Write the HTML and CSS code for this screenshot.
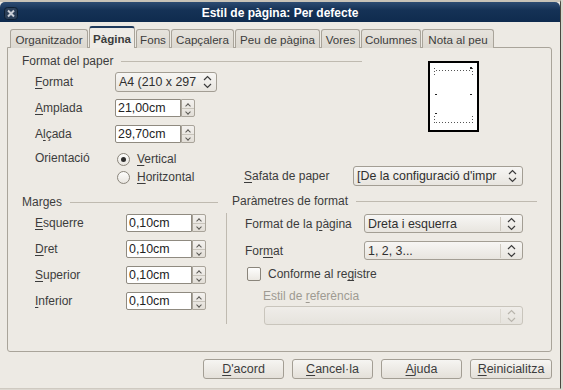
FILE: index.html
```html
<!DOCTYPE html>
<html>
<head>
  <title>Estil de pàgina: Per defecte</title>
  <link rel="stylesheet" href="styles.css">
</head>
<body>
  <div class="window">
    <div class="titlebar">
      <span class="close">
        <svg width="14" height="13" viewBox="0 0 14 13">
          <rect x="0.5" y="0.5" width="13" height="12" rx="3" fill="#2b3f58" stroke="#0d1f33"/>
          <path d="M4 3.5 L10 9.5 M10 3.5 L4 9.5" stroke="#c9ced6" stroke-width="2"/>
        </svg>
      </span>
      <span class="title">Estil de pàgina: Per defecte</span>
    </div>

    <div class="dialog">
      <div class="tabs">
        <div class="tab tab-organitzador">Organitzador</div>
        <div class="tab tab-pagina active">Pàgina</div>
        <div class="tab tab-fons">Fons</div>
        <div class="tab tab-capcalera">Capçalera</div>
        <div class="tab tab-peu">Peu de pàgina</div>
        <div class="tab tab-vores">Vores</div>
        <div class="tab tab-columnes">Columnes</div>
        <div class="tab tab-nota">Nota al peu</div>
      </div>

      <div class="panel">
        <!-- Format del paper -->
        <div class="paper-top">
          <div class="paper-main">
            <div class="heading"><span>Format del paper</span></div>
            <div class="field-row">
              <label class="label"><u>F</u>ormat</label>
              <div class="combo combo-format">
                <span class="combo-text">A4 (210 x 297</span>
                <span class="combo-arrow">
                  <svg width="9" height="14" viewBox="0 0 9 14"><path d="M1 5 L4.5 1.5 L8 5 M1 9 L4.5 12.5 L8 9" fill="none" stroke="#3c3c3c" stroke-width="1.2"/></svg>
                </span>
              </div>
            </div>
            <div class="field-row">
              <label class="label"><u>A</u>mplada</label>
              <div class="spin">
                <span class="spin-text">21,00cm</span>
                <span class="spin-btns"><i class="up"></i><i class="down"></i></span>
              </div>
            </div>
            <div class="field-row">
              <label class="label">A<u>l</u>çada</label>
              <div class="spin">
                <span class="spin-text">29,70cm</span>
                <span class="spin-btns"><i class="up"></i><i class="down"></i></span>
              </div>
            </div>
          </div>
          <div class="preview">
            <svg width="47" height="67" viewBox="0 0 47 67">
              <g stroke="#555" stroke-width="1" stroke-dasharray="1 2" fill="none">
                <line x1="6" y1="7.5" x2="41" y2="7.5"/>
                <line x1="6" y1="59.5" x2="41" y2="59.5"/>
                <line x1="4.5" y1="5" x2="4.5" y2="14"/>
                <line x1="42.5" y1="5" x2="42.5" y2="14"/>
                <line x1="4.5" y1="53" x2="4.5" y2="62"/>
                <line x1="42.5" y1="53" x2="42.5" y2="62"/>
              </g>
              <g fill="#222">
                <rect x="5" y="31" width="2" height="1"/>
                <rect x="40" y="31" width="2" height="1"/>
                <rect x="5" y="50" width="2" height="1"/>
                <rect x="40" y="4" width="2" height="2"/>
              </g>
            </svg>
          </div>
        </div>

        <div class="orient">
          <label class="label orient-label">Orientació</label>
          <div class="radios">
            <div class="radio-row"><span class="radio checked"></span><span><u>V</u>ertical</span></div>
            <div class="radio-row"><span class="radio"></span><span><u>H</u>oritzontal</span></div>
          </div>
          <div class="tray">
            <label class="tray-label"><u>S</u>afata de paper</label>
            <div class="combo combo-tray">
              <span class="combo-text">[De la configuració d'impr</span>
              <span class="combo-arrow">
                <svg width="9" height="14" viewBox="0 0 9 14"><path d="M1 5 L4.5 1.5 L8 5 M1 9 L4.5 12.5 L8 9" fill="none" stroke="#3c3c3c" stroke-width="1.2"/></svg>
              </span>
            </div>
          </div>
        </div>

        <div class="bottom">
          <!-- Marges -->
          <div class="margins">
            <div class="heading"><span>Marges</span></div>
            <div class="field-row">
              <label class="label label-wide"><u>E</u>squerre</label>
              <div class="spin"><span class="spin-text">0,10cm</span><span class="spin-btns"><i class="up"></i><i class="down"></i></span></div>
            </div>
            <div class="field-row">
              <label class="label label-wide"><u>D</u>ret</label>
              <div class="spin"><span class="spin-text">0,10cm</span><span class="spin-btns"><i class="up"></i><i class="down"></i></span></div>
            </div>
            <div class="field-row">
              <label class="label label-wide"><u>S</u>uperior</label>
              <div class="spin"><span class="spin-text">0,10cm</span><span class="spin-btns"><i class="up"></i><i class="down"></i></span></div>
            </div>
            <div class="field-row">
              <label class="label label-wide"><u>I</u>nferior</label>
              <div class="spin"><span class="spin-text">0,10cm</span><span class="spin-btns"><i class="up"></i><i class="down"></i></span></div>
            </div>
          </div>

          <!-- Paràmetres de format -->
          <div class="params">
            <div class="heading heading-params"><span>Paràmetres de format</span></div>
            <div class="params-body">
              <div class="param-row">
                <label class="param-label">Format de la <u>p</u>àgina</label>
                <div class="combo combo-param">
                  <span class="combo-text">Dreta i esquerra</span>
                  <span class="combo-arrow">
                    <svg width="9" height="14" viewBox="0 0 9 14"><path d="M1 5 L4.5 1.5 L8 5 M1 9 L4.5 12.5 L8 9" fill="none" stroke="#3c3c3c" stroke-width="1.2"/></svg>
                  </span>
                </div>
              </div>
              <div class="param-row param-row-2">
                <label class="param-label">For<u>m</u>at</label>
                <div class="combo combo-param">
                  <span class="combo-text">1, 2, 3...</span>
                  <span class="combo-arrow">
                    <svg width="9" height="14" viewBox="0 0 9 14"><path d="M1 5 L4.5 1.5 L8 5 M1 9 L4.5 12.5 L8 9" fill="none" stroke="#3c3c3c" stroke-width="1.2"/></svg>
                  </span>
                </div>
              </div>
              <div class="check-row">
                <span class="checkbox"></span>
                <span>Conforme al re<u>g</u>istre</span>
              </div>
              <div class="ref-label">Estil de <u>r</u>eferència</div>
              <div class="combo combo-disabled">
                <span class="combo-text"></span>
                <span class="combo-arrow">
                  <svg width="9" height="14" viewBox="0 0 9 14"><path d="M1 5 L4.5 1.5 L8 5 M1 9 L4.5 12.5 L8 9" fill="none" stroke="#b9b5ad" stroke-width="1.2"/></svg>
                </span>
              </div>
            </div>
          </div>
        </div>
      </div>

      <div class="buttons">
        <button><u>D</u>'acord</button>
        <button><u>C</u>ancel·la</button>
        <button><u>A</u>juda</button>
        <button><u>R</u>einicialitza</button>
      </div>
    </div>
  </div>
</body>
</html>
```

FILE: styles.css
```css
body {
  margin: 0;
  font-family: "Liberation Sans", Arial, sans-serif;
  font-size: 12px;
  color: #3c3c3c;
  background-color: #dcd8d0;
}

u {
  text-decoration: underline;
  text-underline-offset: 2px;
}

.window {
  width: 561px;
  height: 389px;
  border-right: 1px solid #4a4740;
  border-bottom: 1px solid #cfcac1;
  background-color: #edeae4;
  border-top: 2px solid #c8c3b8;
  box-sizing: border-box;
}

.titlebar {
  height: 20px;
  display: flex;
  align-items: center;
  background: linear-gradient(#2d4c72, #153256 40%, #0f2b4e);
  border-radius: 5px 5px 0 0;
}

.close {
  display: flex;
  margin-left: 4px;
  margin-top: 3px;
}

.title {
  flex: 1;
  text-align: center;
  color: #fff;
  font-weight: bold;
  font-size: 12px;
  margin-right: 18px;
  margin-top: 2px;
}

/* tabs */
.tabs {
  display: flex;
  align-items: flex-end;
  height: 21px;
  padding-top: 5px;
  padding-left: 10px;
  position: relative;
  z-index: 1;
  margin-bottom: -1px;
}

.tab {
  height: 18px;
  line-height: 19px;
  text-align: center;
  font-size: 11.6px;
  color: #3c3c3c;
  background: linear-gradient(#e6e3dd, #dcd8d0);
  border: 1px solid #a9a49a;
  border-bottom: none;
  border-radius: 3px 3px 0 0;
  margin-right: 1px;
  white-space: nowrap;
}

.tab.active {
  height: 20px;
  line-height: 21px;
  font-weight: bold;
  background: #efece7;
  border-top: 2px solid #1f3a5c;
}

.tab-organitzador { width: 76px; }
.tab-pagina { width: 44px; }
.tab-fons { width: 32px; }
.tab-capcalera { width: 61px; }
.tab-peu { width: 83px; }
.tab-vores { width: 37px; }
.tab-columnes { width: 58px; }
.tab-nota { width: 70px; }

.panel {
  margin-left: 7px;
  width: 543px;
  height: 303px;
  border: 1px solid #a9a49a;
  border-radius: 0 3px 3px 3px;
  background-color: #edeae4;
}

.heading {
  display: flex;
  align-items: center;
  height: 14px;
  line-height: 14px;
  color: #3c3c3c;
}

.heading::after {
  content: "";
  flex: 1;
  height: 1px;
  margin-left: 8px;
  background-color: #bfbab0;
}

/* paper format */
.paper-top {
  display: flex;
}

.paper-main {
  width: 340px;
  margin-left: 14px;
  padding-top: 6px;
}

.paper-main .heading {
  margin-bottom: 1px;
}

.field-row {
  display: flex;
  align-items: center;
  height: 26px;
}

.label {
  width: 80px;
  padding-left: 13px;
  flex-shrink: 0;
}

.label-wide {
  width: 91px;
}

.preview {
  margin-left: 66px;
  margin-top: 13px;
  width: 47px;
  height: 67px;
  border: 2px solid #000;
  background-color: #fff;
}

.preview svg {
  display: block;
}

/* combo boxes */
.combo {
  display: flex;
  align-items: center;
  height: 18px;
  border: 1px solid #a39e94;
  border-radius: 3px;
  background: linear-gradient(#f7f6f4, #e8e5df);
  overflow: hidden;
}

.combo-text {
  flex: 1;
  padding-left: 3px;
  white-space: nowrap;
  overflow: hidden;
  font-size: 12.4px;
  color: #2f2f2f;
}

.combo-arrow {
  display: flex;
  align-items: center;
  height: 14px;
  padding: 0 6px;
  border-left: 1px solid #cfcac1;
}

.combo-format {
  width: 100px;
}

.combo-format .combo-arrow {
  border-left: none;
  padding: 0 4px 0 2px;
}

.combo-tray {
  width: 168px;
}

.combo-tray .combo-arrow {
  border-left: none;
  padding: 0 5px 0 2px;
}

.combo-param {
  width: 157px;
  height: 17px;
}

.combo-disabled {
  width: 257px;
  height: 17px;
  margin-left: 37px;
  margin-top: 3px;
  border-color: #c9c5bc;
  background: linear-gradient(#efede9, #e6e3dd);
}

.combo-disabled .combo-arrow {
  border-left-color: #dcd8d0;
}

/* spin boxes */
.spin {
  display: flex;
  height: 18px;
  width: 80px;
}

.spin-text {
  width: 62px;
  padding-left: 2px;
  line-height: 16px;
  border: 1px solid #8f8a80;
  border-radius: 2px 0 0 2px;
  background-color: #fff;
  font-size: 12.4px;
  color: #222;
}

.spin-btns {
  width: 12px;
  display: flex;
  flex-direction: column;
  border: 1px solid #a9a49a;
  border-radius: 0 2px 2px 0;
  background: linear-gradient(#f3f1ee, #e2ded7);
}

.spin-btns i {
  flex: 1;
  position: relative;
}

.spin-btns i.up {
  border-bottom: 1px solid #c9c5bc;
}

.spin-btns i::after {
  content: "";
  position: absolute;
  left: 4px;
  width: 3px;
  height: 3px;
  border-left: 1px solid #5a5853;
  border-top: 1px solid #5a5853;
}

.spin-btns i.up::after {
  top: 4px;
  transform: rotate(45deg);
}

.spin-btns i.down::after {
  top: 1px;
  transform: rotate(-135deg);
}

/* orientation */
.orient {
  display: flex;
  margin-top: 3px;
  padding-left: 27px;
}

.orient-label {
  padding-left: 0;
  width: 80px;
  line-height: 14px;
  margin-top: 1px;
}

.radios {
  width: 129px;
}

.radio-row {
  display: flex;
  align-items: center;
  height: 18px;
}

.radio {
  width: 11px;
  height: 11px;
  margin-left: 2px;
  margin-right: 7px;
  border: 1px solid #8a857b;
  border-radius: 50%;
  background: linear-gradient(#fdfdfc, #e9e6e0);
  position: relative;
}

.radio.checked::after {
  content: "";
  position: absolute;
  left: 3px;
  top: 3px;
  width: 5px;
  height: 5px;
  border-radius: 50%;
  background-color: #2e2e2e;
}

.tray {
  display: flex;
  align-items: center;
  margin-top: 16px;
  height: 20px;
}

.tray-label {
  width: 109px;
}

/* bottom sections */
.bottom {
  display: flex;
  margin-top: 9px;
}

.margins {
  width: 196px;
  margin-left: 14px;
}

.margins .heading {
  margin-bottom: 1px;
}

.params {
  width: 311px;
  margin-left: 8px;
}

.heading-params {
  padding-left: 6px;
  margin-top: -1px;
}

.params-body {
  margin-top: 5px;
  height: 110px;
  border-left: 1px solid #bfbab0;
  padding-top: 1px;
}

.param-row {
  display: flex;
  align-items: center;
  height: 19px;
}

.param-row-2 {
  margin-top: 8px;
}

.param-label {
  width: 119px;
  padding-left: 18px;
}

.check-row {
  display: flex;
  align-items: center;
  height: 14px;
  margin-top: 7px;
  padding-left: 20px;
}

.checkbox {
  width: 12px;
  height: 12px;
  margin-right: 7px;
  border: 1px solid #8a857b;
  border-radius: 2px;
  background: linear-gradient(#fdfdfc, #ebe8e2);
}

.ref-label {
  margin-top: 8px;
  height: 14px;
  line-height: 14px;
  padding-left: 36px;
  color: #9e9a92;
}

/* dialog buttons */
.buttons {
  display: flex;
  gap: 8px;
  margin-top: 7px;
  margin-left: 203px;
}

button {
  width: 81px;
  height: 20px;
  padding: 0;
  font-family: "Liberation Sans", Arial, sans-serif;
  font-size: 12.5px;
  color: #3c3c3c;
  border: 1px solid #a39e94;
  border-radius: 3px;
  background: linear-gradient(#f6f5f2, #e4e0d9);
}

.buttons button:last-child {
  width: 82px;
}
```
